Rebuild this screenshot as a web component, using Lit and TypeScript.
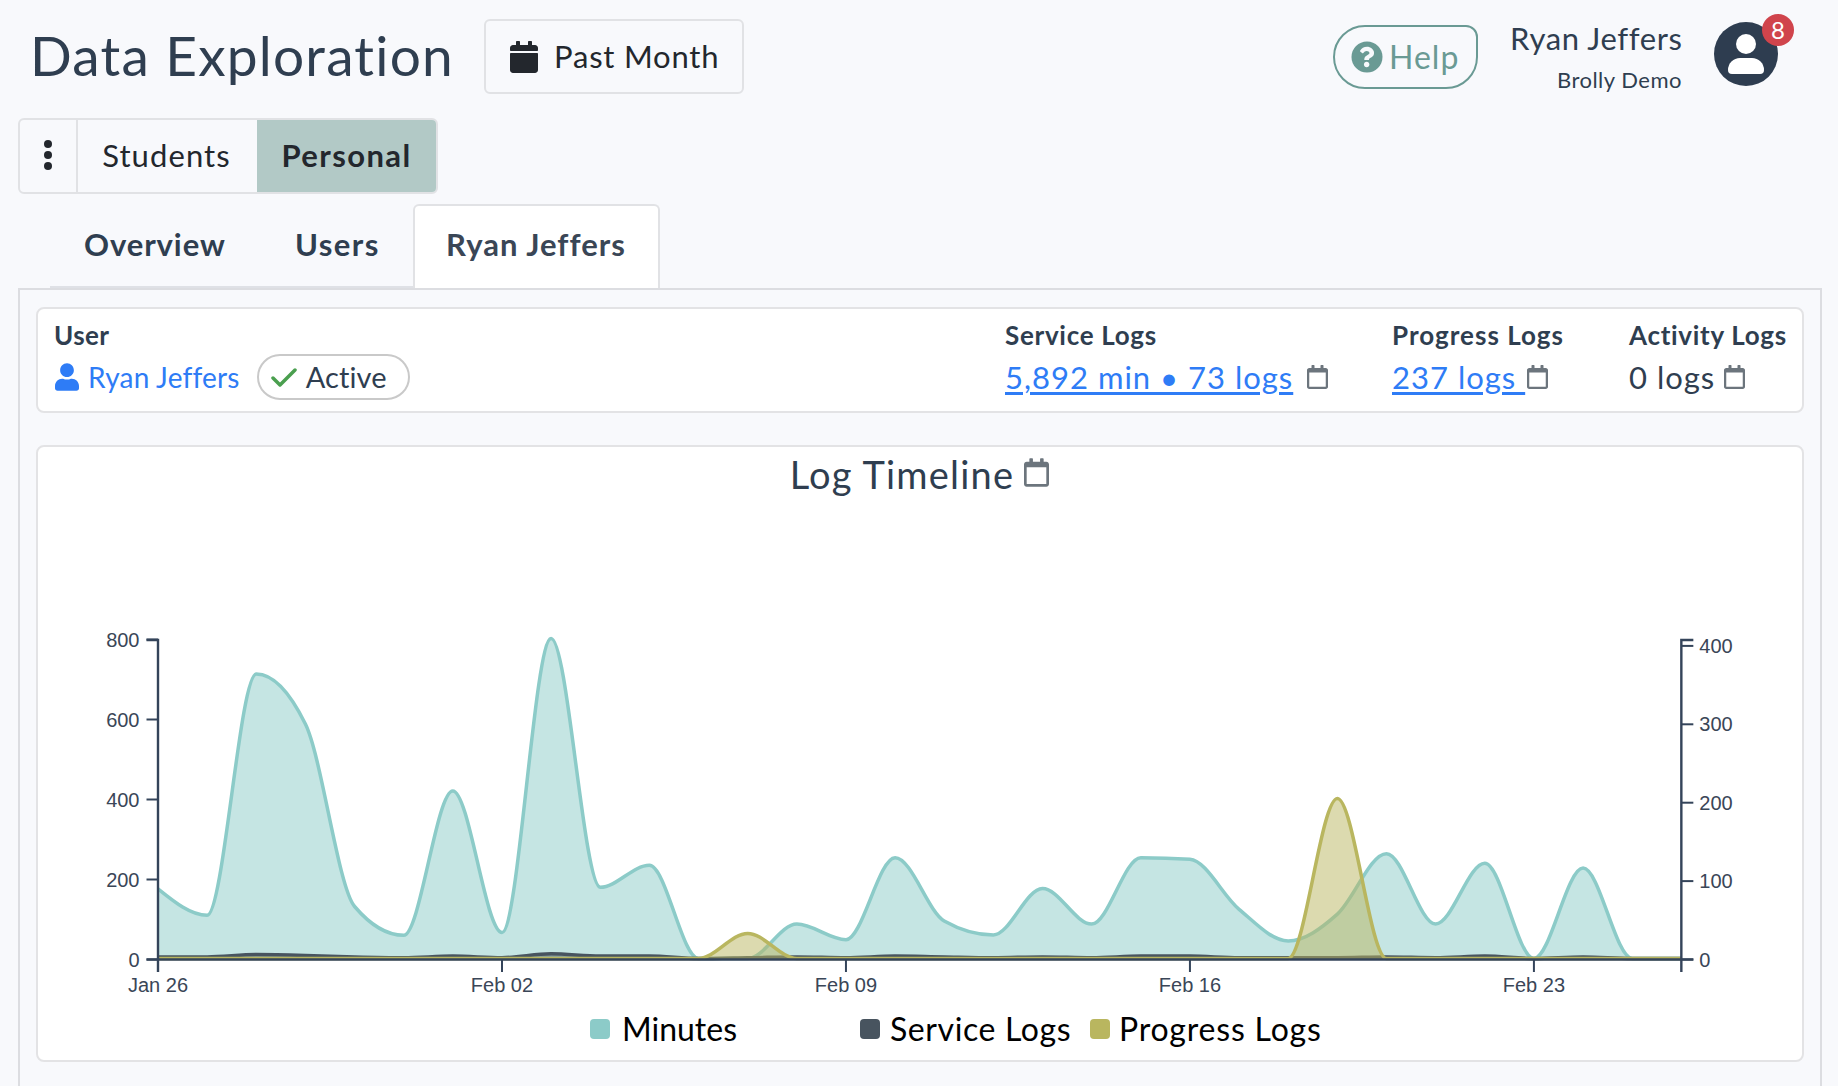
import { LitElement, html, css, svg } from "lit";
import { customElement } from "lit/decorators.js";

const CAL_SOLID = "M12 192h424c6.6 0 12 5.4 12 12v260c0 26.5-21.5 48-48 48H48c-26.5 0-48-21.5-48-48V204c0-6.6 5.4-12 12-12zm436-44v-36c0-26.5-21.5-48-48-48h-48V12c0-6.6-5.4-12-12-12h-40c-6.6 0-12 5.4-12 12v52H160V12c0-6.6-5.4-12-12-12h-40c-6.6 0-12 5.4-12 12v52H48C21.5 64 0 85.5 0 112v36c0 6.6 5.4 12 12 12h424c6.6 0 12-5.4 12-12z";
const CAL_REG = "M400 64h-48V12c0-6.6-5.4-12-12-12h-40c-6.6 0-12 5.4-12 12v52H160V12c0-6.6-5.4-12-12-12h-40c-6.6 0-12 5.4-12 12v52H48C21.5 64 0 85.5 0 112v352c0 26.5 21.5 48 48 48h352c26.5 0 48-21.5 48-48V112c0-26.5-21.5-48-48-48zm-6 400H54c-3.3 0-6-2.7-6-6V160h352v298c0 3.3-2.7 6-6 6z";
const QMARK = "M262.655 90c-54.497 0-89.255 22.957-116.549 63.758-3.536 5.286-2.353 12.415 2.715 16.258l34.699 26.31c5.205 3.947 12.621 3.008 16.665-2.122 17.864-22.658 30.113-35.797 57.303-35.797 20.429 0 45.698 13.148 45.698 32.958 0 14.976-12.363 22.667-32.534 33.976C247.128 238.528 216 254.941 216 296v4c0 6.627 5.373 12 12 12h56c6.627 0 12-5.373 12-12v-1.333c0-28.462 83.186-29.647 83.186-106.667 0-58.002-60.165-102-116.531-102zM256 338c-25.365 0-46 20.635-46 46 0 25.364 20.635 46 46 46s46-20.636 46-46c0-25.365-20.635-46-46-46z";
const USER = "M224 256c70.7 0 128-57.3 128-128S294.7 0 224 0 96 57.3 96 128s57.3 128 128 128zm89.6 32h-16.7c-22.2 10.2-46.9 16-72.9 16s-50.6-5.8-72.9-16h-16.7C60.2 288 0 348.2 0 422.4V464c0 26.5 21.5 48 48 48h352c26.5 0 48-21.5 48-48v-41.6c0-74.2-60.2-134.4-134.4-134.4z";

const X0 = 158, DX = 49.14, Y0 = 959.5;
const minutes = [174,108,711,586,130,58,419,65,800,178,233,0,0,86,47,252,94,59,175,86,252,248,123,44,111,262,86,238,0,226,0,0];
const service = [2,2,5,4,2,1,3,1,6,3,3,0,1,2,1,3,2,1,2,1,3,3,1,1,1,2,1,3,0,2,0,0];
const progress = [0,0,0,0,0,0,0,0,0,0,0,0,32,0,0,0,0,0,0,0,0,0,0,0,204,0,0,0,0,0,0,0];

function curve(vals: number[], k: number): string {
  const h = DX;
  const y = vals.map((v) => Y0 - 1 - v * k);
  const n = y.length;
  const s = y.slice(0, n - 1).map((v, i) => (y[i + 1] - v) / h);
  const t: number[] = new Array(n).fill(0);
  for (let i = 1; i < n - 1; i++) {
    const a = s[i - 1], b = s[i];
    const sign = (Math.sign(a) || 1) + (Math.sign(b) || 1);
    t[i] = (a === 0 || b === 0) ? 0 : sign * Math.min(Math.abs(a), Math.abs(b), 0.25 * Math.abs(a + b));
  }
  t[0] = (3 * s[0] - t[1]) / 2;
  t[n - 1] = (3 * s[n - 2] - t[n - 2]) / 2;
  let d = `M${X0},${y[0].toFixed(1)}`;
  for (let i = 0; i < n - 1; i++) {
    const x1 = X0 + DX * i, x2 = x1 + DX;
    d += `C${(x1 + h / 3).toFixed(1)},${(y[i] + (t[i] * h) / 3).toFixed(1)} ${(x2 - h / 3).toFixed(1)},${(y[i + 1] - (t[i + 1] * h) / 3).toFixed(1)} ${x2.toFixed(1)},${y[i + 1].toFixed(1)}`;
  }
  return d;
}
const series = [
  { vals: minutes, k: 0.4, c: "#8ccbc8" },
  { vals: service, k: 0.784, c: "#48545f" },
  { vals: progress, k: 0.784, c: "#b9b65f" },
];
const XEND = X0 + DX * 31;

function icon(path: string, cls: string) {
  return html`<svg class=${cls} viewBox="0 0 448 512"><path d=${path}></path></svg>`;
}

@customElement("app-root")
export class AppRoot extends LitElement {
  static styles = css`
    :host { display: block; width: 1838px; height: 1086px; overflow: hidden; background: #f8f9fc; color: #2f3e50; font-family: "Lato", "Noto Sans", sans-serif; }
    svg { display: block; flex: none; }
    .header { display: flex; height: 118px; padding-left: 30px; box-sizing: border-box; }
    h1 { margin: 0; font-weight: 400; font-size: 55px; line-height: 64px; padding-top: 23px; letter-spacing: 1.2px; width: 454px; white-space: nowrap; }
    .range { box-sizing: border-box; width: 260px; height: 75px; margin-top: 19px; border: 2px solid #e1e2e5; border-radius: 6px; display: flex; align-items: center; padding-left: 24px; gap: 16px; font-size: 31px; color: #23272d; letter-spacing: 0.8px; }
    .range span { margin-top: -2px; }
    .cal-solid { width: 28px; height: 32px; fill: #23272d; }
    .right { margin-left: auto; display: flex; align-items: flex-start; padding-right: 60px; }
    .help { box-sizing: border-box; width: 145px; height: 64px; margin-top: 25px; border: 2px solid #6a9a94; border-radius: 32px 12px 32px 32px; display: flex; align-items: center; padding-left: 16px; gap: 6px; color: #6a9a94; font-size: 32px; letter-spacing: 1px; }
    .help span { margin-top: -2px; }
    .q { width: 32px; height: 32px; }
    .who { margin-left: 32px; text-align: right; width: 172px; }
    .who .n { font-size: 31px; line-height: 40px; margin-top: 18px; white-space: nowrap; letter-spacing: 0.6px; }
    .who .o { font-size: 22px; line-height: 30px; margin-top: 7px; white-space: nowrap; letter-spacing: 0.5px; }
    .avatar { width: 64px; height: 64px; margin: 22px 0 0 32px; position: relative; }
    .badge { position: absolute; left: 48px; top: -8px; width: 32px; height: 32px; border-radius: 50%; background: #d0444c; color: #fff; font-size: 24px; line-height: 32px; text-align: center; }
    .group { box-sizing: border-box; margin-left: 18px; width: 420px; height: 76px; border: 2px solid #e1e2e5; border-radius: 6px; display: flex; font-size: 31px; color: #23272d; overflow: hidden; }
    .group > div { display: flex; align-items: center; justify-content: center; box-sizing: border-box; padding-bottom: 2px; }
    .dots { width: 58px; border-right: 2px solid #e1e2e5; padding-bottom: 0 !important; }
    .dots svg { width: 10px; height: 34px; fill: #23272d; }
    .students { width: 179px; letter-spacing: 1.1px; padding-right: 2px; }
    .personal { flex: 1; background: #b2c9c6; font-weight: 700; letter-spacing: 1.4px; }
    .tabs { display: flex; margin-top: 10px; height: 84px; padding-left: 50px; font-size: 31px; font-weight: 700; }
    .tab { box-sizing: border-box; height: 84px; border-bottom: 2px solid #dfe1e6; display: flex; align-items: center; padding-bottom: 2px; }
    .t1 { width: 245px; padding-left: 34px; letter-spacing: 0.9px; }
    .t2 { width: 118px; letter-spacing: 1.4px; padding-right: 1px; }
    .t3 { width: 247px; background: #fff; border: 2px solid #e1e2e5; border-bottom: none; border-radius: 6px 6px 0 0; padding: 0 0 6px 31px; color: #3a4656; letter-spacing: 1px; }
    .panel { box-sizing: border-box; margin-left: 18px; width: 1804px; height: 900px; border: 2px solid #dcdde1; padding: 17px 16px; }
    .card { box-sizing: border-box; width: 1768px; background: #fff; border: 2px solid #e3e3e5; border-radius: 8px; }
    .info { height: 106px; display: grid; grid-template-columns: 951px 387px 237px 1fr; padding: 9px 0 0 16px; }
    .lab { font-size: 26px; font-weight: 700; line-height: 34px; white-space: nowrap; letter-spacing: 0.7px; }
    .s2 .lab { letter-spacing: 1px; }
    .u .lab { letter-spacing: 0.4px; }
    .val { display: flex; align-items: center; font-size: 31px; line-height: 46px; white-space: nowrap; margin-top: 2px; letter-spacing: 1px; }
    a { color: #2e7cf6; text-decoration: underline; text-underline-offset: 3px; white-space: pre; }
    .uname { color: #2e7cf6; font-size: 28px; margin-left: 9px; letter-spacing: 0.2px; }
    .uicon { width: 24px; height: 28px; fill: #2e7cf6; margin-left: 1px; }
    .pill { box-sizing: border-box; margin-left: 17px; width: 153px; height: 46px; border: 2px solid #c9c9c9; border-radius: 23px; display: flex; align-items: center; padding-left: 12px; gap: 9px; font-size: 29px; letter-spacing: 0.1px; }
    .check { width: 26px; height: 20px; fill: none; stroke: #4a9f4f; stroke-width: 3.5; stroke-linecap: round; stroke-linejoin: round; }
    .cal-reg { width: 21px; height: 24px; fill: #6c757d; }
    .s1 a { width: 285px; } .s1 .cal-reg { margin-left: 17px; }
    .s2 a { width: 134px; } .s2 .cal-reg { margin-left: 1px; }
    .s3 .cal-reg { margin-left: 9px; }
    .chart { margin-top: 32px; height: 617px; }
    .title { height: 60px; display: flex; justify-content: center; align-items: center; gap: 10px; font-size: 38px; padding: 0 1px 7px 0; box-sizing: border-box; letter-spacing: 1.2px; }
    .title svg { width: 25px; height: 29px; fill: #6c757d; margin-top: -3px; }
    .plot { width: 1764px; height: 498px; }
    .plot text { font-family: "Liberation Sans", sans-serif; font-size: 20px; fill: #3a4657; }
    .legend { display: flex; padding-left: 552px; height: 50px; align-items: flex-start; padding-top: 6px; box-sizing: border-box; font-size: 32px; line-height: 36px; color: #000; }
    .li { display: flex; align-items: center; gap: 12px; white-space: nowrap; }
    .li i { width: 20px; height: 20px; border-radius: 4px; display: block; }
    .l1 { width: 270px; } .l2 { width: 230px; gap: 10px; letter-spacing: 0.6px; } .l3 { gap: 9px; letter-spacing: 0.8px; }
  `;

  private plot() {
    const yl = [800, 600, 400, 200, 0];
    const yr = [400, 300, 200, 100, 0];
    const xt = [["Jan 26", 0], ["Feb 02", 7], ["Feb 09", 14], ["Feb 16", 21], ["Feb 23", 28]] as [string, number][];
    const ax = "#34445a";
    return html`<svg class="plot" viewBox="38 507 1764 498">
      ${series.map((s) => {
        const d = curve(s.vals, s.k);
        return svg`<path d="${d}L${XEND},${Y0}L${X0},${Y0}Z" fill=${s.c} fill-opacity="0.5"></path>
          <path d=${d} fill="none" stroke=${s.c} stroke-width="3.5"></path>`;
      })}
      <path d="M146.500,640H158V972M146.500,${Y0}H${XEND + 12}M${XEND + 12},640H${XEND}V972" fill="none" stroke=${ax} stroke-width="2.4"></path>
      ${yl.map((v) => svg`<path d="M146.500,${Y0 - v * 0.4}H158" stroke=${ax} stroke-width="2"></path>
        <text x="139.500" y=${Y0 - v * 0.4 + 7}  text-anchor="end">${v}</text>`)}
      ${yr.map((v) => svg`<path d="M${XEND},${Y0 - v * 0.784}H${XEND + 12}" stroke=${ax} stroke-width="2"></path>
        <text x=${XEND + 18} y=${Y0 - v * 0.784 + 7}>${v}</text>`)}
      ${xt.map(([t, d]) => svg`<path d="M${X0 + DX * d},${Y0}V972" stroke=${ax} stroke-width="2"></path>
        <text x=${X0 + DX * d} y="992" text-anchor="middle">${t}</text>`)}
    </svg>`;
  }

  render() {
    return html`
      <div class="header">
        <h1>Data Exploration</h1>
        <div class="range">${icon(CAL_SOLID, "cal-solid")}<span>Past Month</span></div>
        <div class="right">
          <div class="help">
            <svg class="q" viewBox="0 0 32 32"><circle cx="16" cy="16" r="15.500" fill="#6a9a94"></circle><path transform="translate(0.3 0.4) scale(0.06)" d=${QMARK} fill="#f8f9fc"></path></svg>
            <span>Help</span>
          </div>
          <div class="who"><div class="n">Ryan Jeffers</div><div class="o">Brolly Demo</div></div>
          <div class="avatar">
            <svg viewBox="0 0 64 64" width="64" height="64">
              <circle cx="32" cy="32" r="32" fill="#2e3d50"></circle>
              <circle cx="32" cy="22" r="10" fill="#fff"></circle>
              <path d="M14 48a12 12 0 0 1 12-12h12a12 12 0 0 1 12 12a4 4 0 0 1-4 4H18a4 4 0 0 1-4-4z" fill="#fff"></path>
            </svg>
            <div class="badge">8</div>
          </div>
        </div>
      </div>
      <div class="group">
        <div class="dots"><svg viewBox="0 0 10 34"><circle cx="5" cy="5" r="4"></circle><circle cx="5" cy="16" r="4"></circle><circle cx="5" cy="27" r="4"></circle></svg></div>
        <div class="students">Students</div>
        <div class="personal">Personal</div>
      </div>
      <div class="tabs">
        <div class="tab t1">Overview</div>
        <div class="tab t2">Users</div>
        <div class="tab t3">Ryan Jeffers</div>
      </div>
      <div class="panel">
        <div class="card info">
          <div class="u">
            <div class="lab">User</div>
            <div class="val">
              ${icon(USER, "uicon")}<span class="uname">Ryan Jeffers</span>
              <div class="pill"><svg class="check" viewBox="0 0 26 20"><path d="M2 11l7 7L24 3"></path></svg><span>Active</span></div>
            </div>
          </div>
          <div class="s1">
            <div class="lab">Service Logs</div>
            <div class="val"><a>5,892 min • 73 logs</a>${icon(CAL_REG, "cal-reg")}</div>
          </div>
          <div class="s2">
            <div class="lab">Progress Logs</div>
            <div class="val"><a>237 logs </a>${icon(CAL_REG, "cal-reg")}</div>
          </div>
          <div class="s3">
            <div class="lab">Activity Logs</div>
            <div class="val"><span>0 logs</span>${icon(CAL_REG, "cal-reg")}</div>
          </div>
        </div>
        <div class="card chart">
          <div class="title"><span>Log Timeline</span>${icon(CAL_REG, "")}</div>
          ${this.plot()}
          <div class="legend">
            <div class="li l1"><i style="background:#8ccbc8"></i><span>Minutes</span></div>
            <div class="li l2"><i style="background:#48545f"></i><span>Service Logs</span></div>
            <div class="li l3"><i style="background:#b9b65f"></i><span>Progress Logs</span></div>
          </div>
        </div>
      </div>
    `;
  }
}
